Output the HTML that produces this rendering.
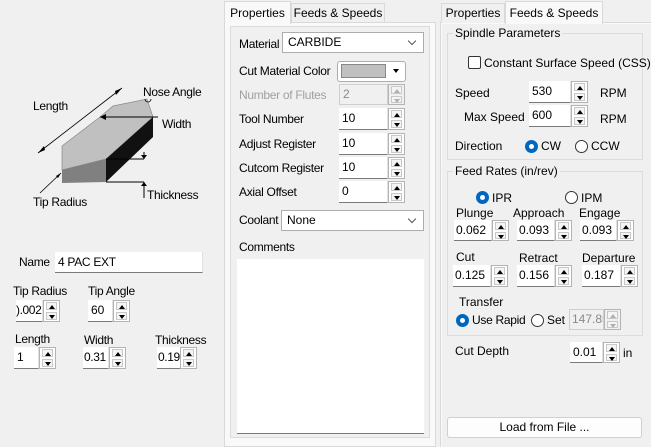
<!DOCTYPE html>
<html><head><meta charset="utf-8">
<style>
*{box-sizing:border-box;margin:0;padding:0}
body{width:651px;height:447px;background:#f0f0f0;font-family:"Liberation Sans",sans-serif;font-size:12px;color:#000;position:relative;overflow:hidden}
div,span,i{position:absolute}
.t{white-space:nowrap;line-height:14px}
.g{color:#a0a0a0}
.in{background:#fff;border-bottom:1px solid #7a7a7a;border-right:1px solid #e0e0e0;line-height:20px;padding-left:3px;white-space:nowrap;overflow:hidden}
.sm{padding-left:1px;letter-spacing:-0.4px}
.dis{background:#f0f0f0;color:#8a8a8a;border:1px solid #cfcfcf}
.sp{width:17px;border:1px solid #b4b4b4;background:#fff}
.sp i{left:2px;width:11px;height:calc(50% - 2px);background:#f4f4f4;border:1px solid #c8c8c8}
.sp .u{top:1px}.sp .d{bottom:1px}
.sp i:after{content:"";position:absolute;left:2px;width:0;height:0;border-left:3px solid transparent;border-right:3px solid transparent}
.sp .u:after{top:2px;border-bottom:4px solid #000}
.sp .d:after{top:2px;border-top:4px solid #000}
.sp.dd i:after{border-bottom-color:#b0b0b0;border-top-color:#b0b0b0}
.cb{background:#fff;border:1px solid #adadad;line-height:19px;padding-left:5px}
.cb:after{content:"";position:absolute;right:8px;top:5px;width:5px;height:5px;border-right:1px solid #555;border-bottom:1px solid #555;transform:rotate(45deg)}
.grp{border:1px solid #dcdcdc}
.gt{background:#f0f0f0;padding:0 2px;line-height:14px;white-space:nowrap}
.rb{width:13px;height:13px;border-radius:50%;border:1px solid #333;background:#fff}
.rb.on{background:#0067c0;border-color:#0067c0}
.rb.on:after{content:"";position:absolute;left:3px;top:3px;width:5px;height:5px;border-radius:50%;background:#fff}
.tab{border:1px solid #d9d9d9;border-bottom:none;line-height:18px;text-align:center;background:#f0f0f0}
.tab.s{background:#f9f9f9;z-index:2}
.n{letter-spacing:-0.3px}
</style></head><body>

<svg style="position:absolute;left:0;top:0" width="222" height="230">
<polygon points="62,146 100,117 113,106 147,99 153,117 106,159 62,170" fill="#c0c0c0" stroke="#888" stroke-width="0.7"/>
<polygon points="62,170 106,159 106,182 62,183" fill="#808080"/>
<polygon points="106,159 153,117 153,137 106,182" fill="#111"/>
<path d="M145,99 a3,3 0 0 0 6,0" fill="none" stroke="#000" stroke-width="0.8"/>
<line x1="38" y1="153" x2="122" y2="88" stroke="#000" stroke-width="0.8"/>
<polygon points="38,153 44,146 45,150" fill="#000"/>
<polygon points="122,88 116,95 115,91" fill="#000"/>
<line x1="100" y1="117" x2="158" y2="117" stroke="#000"/>
<polygon points="100,117 106,114 106,120" fill="#000"/>
<line x1="106" y1="159" x2="144" y2="159" stroke="#000"/>
<line x1="144" y1="152" x2="144" y2="159" stroke="#000"/>
<polygon points="144,159 141,155 147,155" fill="#000"/>
<line x1="106" y1="182" x2="144" y2="182" stroke="#000"/>
<line x1="144" y1="182" x2="144" y2="198" stroke="#000"/>
<polygon points="144,182 141,186 147,186" fill="#000"/>
<line x1="40" y1="193" x2="61" y2="173" stroke="#000" stroke-width="0.8"/>
<polygon points="61,173 58,178 56,176" fill="#000"/>
</svg>
<span class="t n" style="left:33px;top:99px">Length</span>
<span class="t n" style="left:143px;top:85px">Nose Angle</span>
<span class="t n" style="left:162px;top:117px">Width</span>
<span class="t n" style="left:147px;top:188px">Thickness</span>
<span class="t n" style="left:33px;top:195px">Tip Radius</span>

<span class="t n" style="left:19px;top:255px">Name</span>
<div class="in n" style="left:55px;top:252px;width:148px;height:21px">4 PAC EXT</div>
<span class="t n" style="left:13px;top:284px">Tip Radius</span>
<span class="t n" style="left:88px;top:284px">Tip Angle</span>
<div class="in sm" style="left:16px;top:300px;width:27px;height:22px;padding-left:0">).002</div>
<div class="sp" style="left:43px;top:300px;height:22px"><i class="u"></i><i class="d"></i></div>
<div class="in" style="left:88px;top:300px;width:25px;height:22px">60</div>
<div class="sp" style="left:113px;top:300px;height:22px"><i class="u"></i><i class="d"></i></div>
<span class="t n" style="left:15px;top:332px">Length</span>
<span class="t n" style="left:84px;top:333px">Width</span>
<span class="t n" style="left:155px;top:333px">Thickness</span>
<div class="in" style="left:14px;top:347px;width:25px;height:22px">1</div>
<div class="sp" style="left:39px;top:347px;height:22px"><i class="u"></i><i class="d"></i></div>
<div class="in sm" style="left:83px;top:347px;width:26px;height:22px">0.31</div>
<div class="sp" style="left:109px;top:347px;height:22px"><i class="u"></i><i class="d"></i></div>
<div class="in sm" style="left:157px;top:347px;width:24px;height:22px">0.19</div>
<div class="sp" style="left:180px;top:347px;height:22px"><i class="u"></i><i class="d"></i></div>

<div class="tab s" style="left:224px;top:1px;width:67px;height:23px;line-height:22px">Properties</div>
<div class="tab" style="left:291px;top:3px;width:94px;height:20px">Feeds &amp; Speeds</div>
<div style="left:224px;top:22px;width:212px;height:425px;background:#f9f9f9;border:1px solid #d9d9d9"></div>
<div style="left:230px;top:26px;width:200px;height:412px;border:1px solid #dcdcdc;background:#f0f0f0"></div>
<span class="t n" style="left:239px;top:37px">Material</span>
<div class="cb" style="left:282px;top:32px;width:142px;height:21px">CARBIDE</div>
<span class="t n" style="left:239px;top:64px">Cut Material Color</span>
<div style="left:337px;top:61px;width:69px;height:21px;background:#fff;border:1px solid #adadad;border-radius:3px"></div>
<div style="left:341px;top:64px;width:45px;height:14px;background:#c0c0c0;border:1px solid #888"></div>
<div style="left:393px;top:69px;width:0;height:0;border-left:3px solid transparent;border-right:3px solid transparent;border-top:4px solid #000"></div>
<span class="t g n" style="left:239px;top:88px">Number of Flutes</span>
<div class="in dis" style="left:339px;top:84px;width:49px;height:21px;line-height:19px">2</div>
<div class="sp dd" style="left:388px;top:84px;height:21px;background:#f0f0f0"><i class="u"></i><i class="d"></i></div>
<span class="t n" style="left:239px;top:112px">Tool Number</span>
<div class="in" style="left:339px;top:108px;width:49px;height:22px">10</div>
<div class="sp" style="left:388px;top:108px;height:22px"><i class="u"></i><i class="d"></i></div>
<span class="t n" style="left:239px;top:137px">Adjust Register</span>
<div class="in" style="left:339px;top:133px;width:49px;height:22px">10</div>
<div class="sp" style="left:388px;top:133px;height:22px"><i class="u"></i><i class="d"></i></div>
<span class="t n" style="left:239px;top:161px">Cutcom Register</span>
<div class="in" style="left:339px;top:157px;width:49px;height:22px">10</div>
<div class="sp" style="left:388px;top:157px;height:22px"><i class="u"></i><i class="d"></i></div>
<span class="t n" style="left:239px;top:185px">Axial Offset</span>
<div class="in" style="left:339px;top:181px;width:49px;height:22px">0</div>
<div class="sp" style="left:388px;top:181px;height:22px"><i class="u"></i><i class="d"></i></div>
<span class="t n" style="left:239px;top:213px">Coolant</span>
<div class="cb" style="left:281px;top:210px;width:143px;height:21px">None</div>
<span class="t n" style="left:239px;top:240px">Comments</span>
<div style="left:237px;top:259px;width:187px;height:175px;background:#fff;border-bottom:1px solid #7a7a7a"></div>

<div style="left:440px;top:22px;width:211px;height:425px;background:#f9f9f9;border-left:1px solid #d9d9d9;border-top:1px solid #d9d9d9"></div>
<div class="tab" style="left:441px;top:3px;width:64px;height:20px">Properties</div>
<div class="tab s" style="left:505px;top:1px;width:98px;height:23px;line-height:22px">Feeds &amp; Speeds</div>
<div style="left:442px;top:24px;width:209px;height:423px;background:#f0f0f0"></div>

<div class="grp" style="left:447px;top:33px;width:196px;height:127px"></div>
<span class="gt" style="left:453px;top:26px">Spindle Parameters</span>
<div style="left:468px;top:56px;width:13px;height:13px;border:1px solid #333;border-radius:2px;background:#fff"></div>
<span class="t" style="left:484px;top:56px">Constant Surface Speed (CSS)</span>
<span class="t" style="left:455px;top:86px">Speed</span>
<div class="in" style="left:529px;top:81px;width:42px;height:22px">530</div>
<div class="sp" style="left:571px;top:81px;height:22px"><i class="u"></i><i class="d"></i></div>
<span class="t" style="left:600px;top:86px">RPM</span>
<span class="t" style="left:464px;top:110px">Max Speed</span>
<div class="in" style="left:529px;top:105px;width:42px;height:22px">600</div>
<div class="sp" style="left:571px;top:105px;height:22px"><i class="u"></i><i class="d"></i></div>
<span class="t" style="left:600px;top:112px">RPM</span>
<span class="t" style="left:455px;top:139px">Direction</span>
<div class="rb on" style="left:525px;top:140px"></div><span class="t" style="left:541px;top:139px">CW</span>
<div class="rb" style="left:575px;top:140px"></div><span class="t" style="left:591px;top:139px">CCW</span>

<div class="grp" style="left:447px;top:171px;width:196px;height:165px"></div>
<span class="gt" style="left:453px;top:164px">Feed Rates (in/rev)</span>
<div class="rb on" style="left:476px;top:191px"></div><span class="t" style="left:492px;top:191px">IPR</span>
<div class="rb" style="left:565px;top:191px"></div><span class="t" style="left:581px;top:191px">IPM</span>
<span class="t" style="left:456px;top:206px">Plunge</span>
<span class="t" style="left:513px;top:206px">Approach</span>
<span class="t" style="left:579px;top:206px">Engage</span>
<div class="in" style="left:454px;top:220px;width:38px;height:21px;padding-left:2px">0.062</div>
<div class="sp" style="left:492px;top:220px;height:21px"><i class="u"></i><i class="d"></i></div>
<div class="in" style="left:517px;top:220px;width:38px;height:21px;padding-left:2px">0.093</div>
<div class="sp" style="left:555px;top:220px;height:21px"><i class="u"></i><i class="d"></i></div>
<div class="in" style="left:580px;top:220px;width:37px;height:21px;padding-left:2px">0.093</div>
<div class="sp" style="left:617px;top:220px;height:21px"><i class="u"></i><i class="d"></i></div>
<span class="t" style="left:456px;top:250px">Cut</span>
<span class="t" style="left:519px;top:251px">Retract</span>
<span class="t" style="left:582px;top:251px">Departure</span>
<div class="in" style="left:453px;top:265px;width:38px;height:22px;padding-left:2px">0.125</div>
<div class="sp" style="left:491px;top:265px;height:22px"><i class="u"></i><i class="d"></i></div>
<div class="in" style="left:517px;top:265px;width:38px;height:22px;padding-left:2px">0.156</div>
<div class="sp" style="left:555px;top:265px;height:22px"><i class="u"></i><i class="d"></i></div>
<div class="in" style="left:582px;top:265px;width:39px;height:22px;padding-left:2px">0.187</div>
<div class="sp" style="left:621px;top:265px;height:22px"><i class="u"></i><i class="d"></i></div>
<span class="t" style="left:459px;top:295px">Transfer</span>
<div class="rb on" style="left:456px;top:314px"></div><span class="t n" style="left:472px;top:313px">Use Rapid</span>
<div class="rb" style="left:531px;top:314px"></div><span class="t" style="left:547px;top:313px">Set</span>
<div class="in dis" style="left:569px;top:309px;width:35px;height:21px;line-height:19px;padding-left:2px">147.85</div>
<div class="sp dd" style="left:604px;top:309px;height:21px;background:#f0f0f0"><i class="u"></i><i class="d"></i></div>

<span class="t" style="left:455px;top:344px">Cut Depth</span>
<div class="in" style="left:570px;top:342px;width:33px;height:21px">0.01</div>
<div class="sp" style="left:603px;top:342px;height:21px"><i class="u"></i><i class="d"></i></div>
<span class="t" style="left:623px;top:346px">in</span>

<div style="left:447px;top:417px;width:195px;height:21px;background:#fdfdfd;border:1px solid #d0d0d0;border-radius:3px;text-align:center;line-height:19px">Load from File ...</div>
</body></html>
